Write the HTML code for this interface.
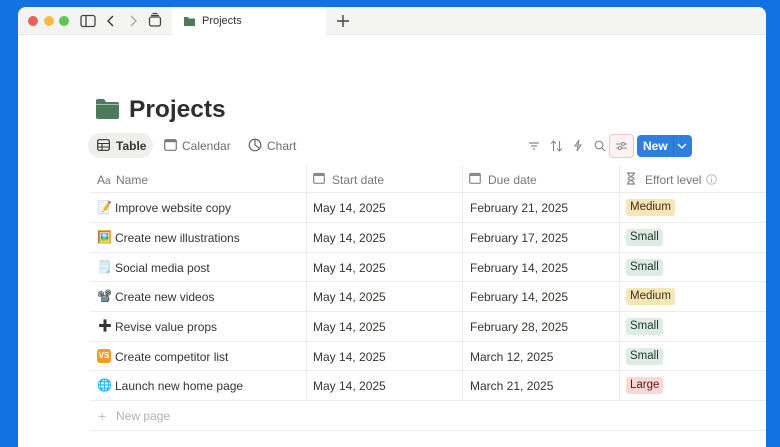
<!DOCTYPE html>
<html><head><meta charset="utf-8"><style>
*{margin:0;padding:0;box-sizing:border-box}
body{width:780px;height:438px;background:#1273e0;font-family:"Liberation Sans","Noto Sans CJK SC",sans-serif;overflow:hidden;position:relative;color:#37352f}
.win{position:absolute;left:18px;top:7px;width:748px;height:440px;background:#fff;border-radius:8px 8px 0 0;overflow:hidden}
.tb{position:absolute;left:0;top:0;width:748px;height:28px;background:#f4f4f3;border-bottom:1px solid #e8e8e6}
.tab{position:absolute;left:154px;top:0;width:154px;height:29px;background:#fff}
.dot{position:absolute;top:9px;width:10px;height:10px;border-radius:50%}
.abs{position:absolute}
.t{position:absolute;font-size:12px;white-space:nowrap}
.hl{position:absolute;left:90px;width:676px;height:1px;background:#ececea}
.vl{position:absolute;width:1px;background:#ececea;top:165px;height:237px}
.tag{position:absolute;left:626px;font-size:11.5px;padding:1px 4px;border-radius:3px;line-height:15px}
.m{background:#f7e7b8;color:#402c1b}.s{background:#dfece3;color:#1c3829}.l{background:#f9d9d5;color:#5d1715}
.hd{color:#787774;font-size:12px}
</style></head><body>
<div class="win">
 <div class="tb"></div>
 <div class="tab"></div>
 <div class="dot" style="left:10px;background:#ee5f57"></div>
 <div class="dot" style="left:26px;background:#f6bd3f"></div>
 <div class="dot" style="left:41px;background:#5fc553"></div>
 <svg class="abs" style="left:62px;top:7px" width="16" height="14" viewBox="0 0 16 14"><rect x="1" y="1.5" width="14" height="11" rx="2" fill="none" stroke="#444" stroke-width="1.3"/><line x1="6" y1="1.5" x2="6" y2="12.5" stroke="#444" stroke-width="1.3"/></svg>
 <svg class="abs" style="left:88px;top:7px" width="10" height="14"><path d="M7 2L2 7L7 12" fill="none" stroke="#333" stroke-width="1.4"/></svg>
 <svg class="abs" style="left:110px;top:7px" width="10" height="14"><path d="M3 2L8 7L3 12" fill="none" stroke="#aaa" stroke-width="1.4"/></svg>
 <svg class="abs" style="left:130px;top:5px" width="14" height="16"><rect x="1.5" y="5" width="11" height="9" rx="2" fill="none" stroke="#444" stroke-width="1.3"/><path d="M3 3.5h8M4.5 1.5h5" stroke="#444" stroke-width="1.2"/></svg>
 <svg class="abs" style="left:166px;top:9px" width="11" height="10"><path d="M0 1h4l1 1.5h6V10H0z" fill="#4c7a5a"/></svg>
 <div class="t" style="left:184px;top:8px;font-size:11px;color:#333">Projects</div>
 <svg class="abs" style="left:318px;top:7px" width="14" height="14"><path d="M7 1v12M1 7h12" stroke="#444" stroke-width="1.4"/></svg>
</div>
<svg class="abs" style="left:96px;top:99px" width="23" height="20"><path d="M0 2a2 2 0 0 1 2-2h6l2 3h11a2 2 0 0 1 2 2v13a2 2 0 0 1-2 2H2a2 2 0 0 1-2-2z" fill="#4c7a5a"/><rect x="0" y="5" width="23" height="1" fill="#fff" opacity=".5"/></svg>
<div class="t" style="left:129px;top:96px;font-size:24.5px;font-weight:bold;color:#2f2e2b">Projects</div>
<div class="abs" style="left:88px;top:133px;width:65px;height:25px;background:#efefed;border-radius:13px"></div>
<svg class="abs" style="left:97px;top:139px" width="13" height="12"><rect x=".7" y=".7" width="11.6" height="10.6" rx="1.5" fill="none" stroke="#37352f" stroke-width="1.2"/><path d="M.7 4.5h11.6M.7 8h11.6M5 4.5v6.8" stroke="#37352f" stroke-width="1.1"/></svg>
<div class="t" style="left:116px;top:139px;font-weight:bold;color:#37352f">Table</div>
<svg class="abs" style="left:164px;top:139px" width="13" height="12"><rect x=".7" y=".7" width="11.6" height="10.6" rx="1.5" fill="none" stroke="#777" stroke-width="1.2"/><rect x=".7" y=".7" width="11.6" height="2.5" fill="#777"/></svg>
<div class="t" style="left:182px;top:139px;color:#6f6e69">Calendar</div>
<svg class="abs" style="left:248px;top:138px" width="14" height="14"><circle cx="7" cy="7" r="5.8" fill="none" stroke="#666" stroke-width="1.2"/><path d="M7 1.2V7l4 3" fill="none" stroke="#666" stroke-width="1.2"/></svg>
<div class="t" style="left:267px;top:139px;color:#6f6e69">Chart</div>
<svg class="abs" style="left:528px;top:140px" width="12" height="12"><path d="M1 3h10M3 6h6M5 9h2" stroke="#888" stroke-width="1.2"/></svg>
<svg class="abs" style="left:550px;top:140px" width="13" height="12"><path d="M3.5 1v10M1 3.5l2.5-2.5 2.5 2.5M9.5 1v10M7 8.5l2.5 2.5 2.5-2.5" fill="none" stroke="#888" stroke-width="1.1"/></svg>
<svg class="abs" style="left:573px;top:139px" width="10" height="13"><path d="M6 1L2 7h3l-1 5 4-6H5z" fill="none" stroke="#888" stroke-width="1.1"/></svg>
<svg class="abs" style="left:594px;top:140px" width="12" height="12"><circle cx="5" cy="5" r="3.8" fill="none" stroke="#888" stroke-width="1.2"/><path d="M8 8l3 3" stroke="#888" stroke-width="1.2"/></svg>
<div class="abs" style="left:609px;top:134px;width:25px;height:24px;border:1px solid #f3c5c5;border-radius:4px;background:#fdf3f3"></div>
<svg class="abs" style="left:615px;top:140px" width="13" height="12"><path d="M1 4h11M1 8h11" stroke="#888" stroke-width="1.1"/><circle cx="8" cy="4" r="1.5" fill="#fff" stroke="#888"/><circle cx="5" cy="8" r="1.5" fill="#fff" stroke="#888"/></svg>
<div class="abs" style="left:637px;top:135px;width:55px;height:22px;background:#2f7fe0;border-radius:4px"></div>
<div class="abs" style="left:673px;top:135px;width:1px;height:22px;background:#2a6fc5"></div>
<div class="t" style="left:643px;top:139px;color:#fff;font-weight:bold">New</div>
<svg class="abs" style="left:677px;top:143px" width="10" height="7"><path d="M1 1l4 4 4-4" fill="none" stroke="#fff" stroke-width="1.4"/></svg>

<div class="t hd" style="left:97px;top:173px">A<span style="font-size:10px">a</span></div>
<div class="t hd" style="left:116px;top:173px">Name</div>
<svg class="abs" style="left:313px;top:172px" width="12" height="12"><rect x=".7" y="1.5" width="10.6" height="9.8" rx="1" fill="none" stroke="#888" stroke-width="1.2"/><rect x=".7" y="1.5" width="10.6" height="2.5" fill="#888"/></svg>
<div class="t hd" style="left:332px;top:173px">Start date</div>
<svg class="abs" style="left:469px;top:172px" width="12" height="12"><rect x=".7" y="1.5" width="10.6" height="9.8" rx="1" fill="none" stroke="#888" stroke-width="1.2"/><rect x=".7" y="1.5" width="10.6" height="2.5" fill="#888"/></svg>
<div class="t hd" style="left:488px;top:173px">Due date</div>
<svg class="abs" style="left:626px;top:172px" width="10" height="13"><path d="M1 1h8M1 12h8M2 1c0 4 6 4 6 5.5S2 8 2 12M8 1c0 4-6 4-6 5.5S8 8 8 12" fill="none" stroke="#888" stroke-width="1.2"/></svg>
<div class="t hd" style="left:645px;top:173px">Effort level</div>
<svg class="abs" style="left:706px;top:174px" width="11" height="11"><circle cx="5.5" cy="5.5" r="4.8" fill="none" stroke="#bbb"/><path d="M5.5 4.5v4" stroke="#bbb"/><circle cx="5.5" cy="3" r=".6" fill="#bbb"/></svg>

<div class="hl" style="top:192px"></div>
<div class="hl" style="top:222px"></div>
<div class="hl" style="top:252px"></div>
<div class="hl" style="top:281px"></div>
<div class="hl" style="top:311px"></div>
<div class="hl" style="top:341px"></div>
<div class="hl" style="top:370px"></div>
<div class="hl" style="top:400px"></div>
<div class="hl" style="top:430px"></div>
<div class="vl" style="left:306px;top:165px;height:235px"></div>
<div class="vl" style="left:462px;top:165px;height:235px"></div>
<div class="vl" style="left:619px;top:165px;height:235px"></div>

<div class="t" style="left:97px;top:200px">📝</div><div class="t" style="left:115px;top:201px">Improve website copy</div>
<div class="t" style="left:97px;top:230px">🖼️</div><div class="t" style="left:115px;top:231px">Create new illustrations</div>
<div class="t" style="left:97px;top:260px">🗒️</div><div class="t" style="left:115px;top:261px">Social media post</div>
<div class="t" style="left:97px;top:289px">📽️</div><div class="t" style="left:115px;top:290px">Create new videos</div>
<div class="t" style="left:98px;top:319px;font-weight:bold;font-size:14px;line-height:14px">✚</div><div class="t" style="left:115px;top:320px">Revise value props</div>
<div class="abs" style="left:97px;top:349px;width:14px;height:14px;background:#f59a23;border-radius:3px;color:#fff;font-size:8px;font-weight:bold;text-align:center;line-height:14px">VS</div><div class="t" style="left:115px;top:350px">Create competitor list</div>
<div class="t" style="left:97px;top:378px">🌐</div><div class="t" style="left:115px;top:379px">Launch new home page</div>

<div class="t" style="left:313px;top:201px">May 14, 2025</div>
<div class="t" style="left:313px;top:231px">May 14, 2025</div>
<div class="t" style="left:313px;top:261px">May 14, 2025</div>
<div class="t" style="left:313px;top:290px">May 14, 2025</div>
<div class="t" style="left:313px;top:320px">May 14, 2025</div>
<div class="t" style="left:313px;top:350px">May 14, 2025</div>
<div class="t" style="left:313px;top:379px">May 14, 2025</div>

<div class="t" style="left:470px;top:201px">February 21, 2025</div>
<div class="t" style="left:470px;top:231px">February 17, 2025</div>
<div class="t" style="left:470px;top:261px">February 14, 2025</div>
<div class="t" style="left:470px;top:290px">February 14, 2025</div>
<div class="t" style="left:470px;top:320px">February 28, 2025</div>
<div class="t" style="left:470px;top:350px">March 12, 2025</div>
<div class="t" style="left:470px;top:379px">March 21, 2025</div>

<div class="tag m" style="top:199px">Medium</div>
<div class="tag s" style="top:229px">Small</div>
<div class="tag s" style="top:259px">Small</div>
<div class="tag m" style="top:288px">Medium</div>
<div class="tag s" style="top:318px">Small</div>
<div class="tag s" style="top:348px">Small</div>
<div class="tag l" style="top:377px">Large</div>

<div class="t" style="left:98px;top:408px;color:#c4c3c0;font-size:14px">+</div>
<div class="t" style="left:116px;top:409px;color:#b4b3af">New page</div>
<div class="abs" style="left:766px;top:0;width:14px;height:438px;background:#1273e0"></div>
</body></html>
